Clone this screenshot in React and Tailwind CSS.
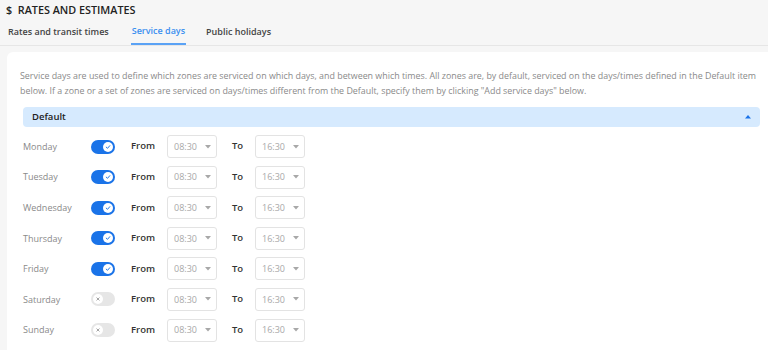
import React from "react";

const days = [
  { name: "Monday", on: true },
  { name: "Tuesday", on: true },
  { name: "Wednesday", on: true },
  { name: "Thursday", on: true },
  { name: "Friday", on: true },
  { name: "Saturday", on: false },
  { name: "Sunday", on: false },
];

function Toggle({ on }) {
  return on ? (
    <div className="w-[24px] h-[14px] rounded-full bg-[#1a73e8] flex items-center justify-end px-[2px]">
      <div className="w-[10px] h-[10px] rounded-full bg-white flex items-center justify-center">
        <svg width="6" height="6" viewBox="0 0 10 10">
          <path d="M2 5.2 L4.2 7.2 L8 2.8" fill="none" stroke="#1a73e8" strokeWidth="1.6" strokeLinecap="round" strokeLinejoin="round" />
        </svg>
      </div>
    </div>
  ) : (
    <div className="w-[24px] h-[14px] rounded-full bg-[#e6e6e6] flex items-center justify-start px-[2px]">
      <div className="w-[10px] h-[10px] rounded-full bg-white flex items-center justify-center">
        <svg width="4" height="4" viewBox="0 0 4 4">
          <path d="M0.8 0.8 L3.2 3.2 M3.2 0.8 L0.8 3.2" stroke="#9a9a9a" strokeWidth="0.9" strokeLinecap="round" />
        </svg>
      </div>
    </div>
  );
}

function Select({ value }) {
  return (
    <div className="w-[50px] h-[23px] border border-[#e3e3e3] rounded-[3px] bg-white flex items-center justify-between pl-[6px] pr-[5px]">
      <span className="text-[9px] text-[#a8a8a8]">{value}</span>
      <svg width="6" height="4" viewBox="0 0 6 4">
        <path d="M0 0 L6 0 L3 3.5 Z" fill="#a8a8a8" />
      </svg>
    </div>
  );
}

export default function App() {
  return (
    <div
      className="w-[768px] h-[350px] overflow-hidden bg-[#f6f6f6] text-[#333] flex flex-col"
      style={{ fontFamily: "'Open Sans', 'Noto Sans', sans-serif" }}
    >
      <div className="pl-[6px] pt-[1px] h-[20px] leading-[17px] text-[10.8px] font-semibold text-[#222]">
        $&nbsp; RATES AND ESTIMATES
      </div>
      <div className="flex items-end border-b border-[#e6e6e6] h-[26px]">
        <div className="pl-[8px] pr-[22px] pb-[7px] text-[9px] font-semibold text-[#444]">Rates and transit times</div>
        <div className="px-[1px] mr-[20px] pb-[6px] text-[9px] font-semibold text-[#3a8ff0] border-b-2 border-[#5aa2f5]">Service days</div>
        <div className="pb-[7px] text-[9px] font-semibold text-[#444]">Public holidays</div>
      </div>
      <div className="flex-1 ml-[7px] mt-[6px] bg-white rounded-tl-[6px] pl-[13px] pr-[8px] pt-[16px]">
        <p className="text-[8.9px] leading-[15px] text-[#8a8a8a] pr-[2px]">
          Service days are used to define which zones are serviced on which days, and between which times. All zones are, by default, serviced on the days/times defined in the Default item below. If a zone or a set of zones are serviced on days/times different from the Default, specify them by clicking "Add service days" below.
        </p>
        <div className="mt-[9px] ml-[3px] h-[20px] rounded-[4px] bg-[#d6eafe] flex items-center justify-between pl-[9px] pr-[9px]">
          <span className="text-[9.5px] font-semibold text-[#222]">Default</span>
          <svg width="6" height="4" viewBox="0 0 6 4">
            <path d="M0 3.5 L6 3.5 L3 0 Z" fill="#1a73e8" />
          </svg>
        </div>
        <div className="ml-[3px] mt-[8px] flex flex-col gap-[7.6px]">
          {days.map((d) => (
            <div key={d.name} className="flex items-center h-[23px]">
              <div className="w-[68px] text-[9px] text-[#8a8a8a]">{d.name}</div>
              <Toggle on={d.on} />
              <div className="ml-[16px] w-[36px] text-[9.5px] font-semibold text-[#333]">From</div>
              <Select value="08:30" />
              <div className="ml-[15px] w-[23px] text-[9.5px] font-semibold text-[#333]">To</div>
              <Select value="16:30" />
            </div>
          ))}
        </div>
      </div>
    </div>
  );
}
